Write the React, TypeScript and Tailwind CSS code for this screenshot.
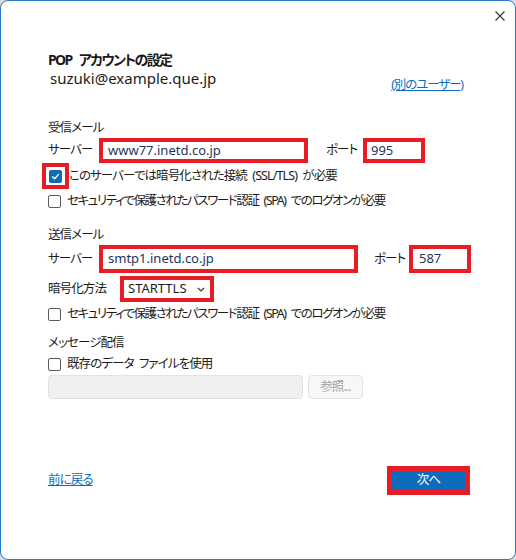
const FONT = "font-['Noto_Sans','Noto_Sans_CJK_JP',sans-serif]";
const JP = 'text-[12.5px] tracking-[-0.9px] whitespace-nowrap [word-spacing:3px]';
const JP_TIGHT = 'text-[12.5px] tracking-[-1.4px] whitespace-nowrap [word-spacing:3px]';

function Checkbox({ checked }: { checked?: boolean }) {
  if (checked) {
    return (
      <span className="flex h-[13px] w-[13px] items-center justify-center rounded-[2px] bg-[#0f6cbd]">
        <svg width="9" height="9" viewBox="0 0 9 9" fill="none">
          <path d="M1.5 4.8 L3.6 6.8 L7.6 2.4" stroke="white" strokeWidth="1.3" strokeLinecap="round" strokeLinejoin="round" />
        </svg>
      </span>
    );
  }
  return <span className="block h-[13px] w-[13px] shrink-0 rounded-[2px] border border-[#5c5c5c] bg-white" />;
}

function RedBox({ className, children }: { className: string; children: React.ReactNode }) {
  return (
    <div className={`flex shrink-0 items-center border-4 border-[#e81c24] bg-white ${className}`}>
      {children}
    </div>
  );
}

export default function App() {
  return (
    <div className={`h-[560px] w-[516px] bg-[#dcdcdc] ${FONT} [font-feature-settings:'palt'] text-[13px] text-[#1b1b1b]`}>
      <div className="relative flex h-full w-full flex-col rounded-[8px] border border-[#2a7ad0] bg-white pl-[47px]">
        {/* Close */}
        <button className="absolute right-[10px] top-[10px] h-[10px] w-[10px]">
          <svg width="10" height="10" viewBox="0 0 10 10">
            <path d="M0.5 0.5 L9.5 9.5 M9.5 0.5 L0.5 9.5" stroke="#333" strokeWidth="1.1" />
          </svg>
        </button>

        {/* Header */}
        <div className="mt-[50px] flex h-[18px] items-center text-[14px] font-bold leading-[18px] tracking-[-1.6px] [word-spacing:5px]">
          POP アカウントの設定
        </div>
        <div className="flex h-[18px] items-start pr-[52px]">
          <span className="ml-[2px] text-[15px] leading-[18px]">suzuki@example.que.jp</span>
          <a className="ml-auto mt-[8px] text-[12.5px] leading-[16px] tracking-[-1.1px] text-[#0a6cc8] underline">(別のユーザー)</a>
        </div>

        {/* 受信メール */}
        <div className={`mt-[33px] flex h-[16px] items-center ${JP}`}>受信メール</div>
        <div className="mt-[2px] flex h-[25px] items-center">
          <span className={`w-[51px] ${JP}`}>サーバー</span>
          <RedBox className="h-[25px] w-[209px] pl-[5px] text-[#1e3560]">www77.inetd.co.jp</RedBox>
          <span className={`ml-[18px] w-[37px] ${JP}`}>ポート</span>
          <RedBox className="h-[25px] w-[62px] pl-[4px] text-[#1e3560]">995</RedBox>
        </div>
        <div className="flex h-[26px] items-center">
          <div className="ml-[-6px] flex h-[26px] w-[27px] items-center justify-center border-4 border-[#e81c24]">
            <Checkbox checked />
          </div>
          <span className={JP}>このサーバーでは暗号化された接続 (SSL/TLS) が必要</span>
        </div>
        <div className="mt-[4px] flex h-[16px] items-center">
          <Checkbox />
          <span className={`ml-[6px] ${JP_TIGHT}`}>セキュリティで保護されたパスワード認証 (SPA) でのログオンが必要</span>
        </div>

        {/* 送信メール */}
        <div className={`mt-[18px] flex h-[16px] items-center ${JP}`}>送信メール</div>
        <div className="mt-[2px] flex h-[28px] items-center">
          <span className={`w-[51px] ${JP}`}>サーバー</span>
          <RedBox className="h-[28px] w-[259px] pl-[5px] text-[#1e3560]">smtp1.inetd.co.jp</RedBox>
          <span className={`ml-[16px] w-[35px] ${JP}`}>ポート</span>
          <RedBox className="h-[28px] w-[62px] pl-[6px] text-[#1e3560]">587</RedBox>
        </div>
        <div className="mt-[3px] flex h-[26px] items-center">
          <span className={`w-[72px] ${JP}`}>暗号化方法</span>
          <RedBox className="h-[26px] w-[94px] pl-[4px]">
            <span>STARTTLS</span>
            <svg className="ml-[10px]" width="8" height="5" viewBox="0 0 8 5">
              <path d="M1 1 L4 4 L7 1" stroke="#333" strokeWidth="1.1" fill="none" />
            </svg>
          </RedBox>
        </div>
        <div className="mt-[4px] flex h-[16px] items-center">
          <Checkbox />
          <span className={`ml-[6px] ${JP_TIGHT}`}>セキュリティで保護されたパスワード認証 (SPA) でのログオンが必要</span>
        </div>

        {/* メッセージ配信 */}
        <div className={`mt-[13px] flex h-[16px] items-center ${JP}`}>メッセージ配信</div>
        <div className="mt-[5px] flex h-[16px] items-center">
          <Checkbox />
          <span className={`ml-[6px] ${JP}`}>既存のデータ ファイルを使用</span>
        </div>
        <div className="mt-[3px] flex h-[24px] items-center">
          <div className="h-[24px] w-[255px] rounded-[4px] border border-[#e2e2e2] bg-[#f0f0f0]" />
          <div className={`ml-[5px] flex h-[24px] w-[55px] items-center justify-center rounded-[4px] border border-[#e2e2e2] bg-[#f7f7f7] text-[#a3a3a3] ${JP}`}>
            参照...
          </div>
        </div>

        {/* Footer */}
        <div className="mt-[67px] flex h-[29px] items-center pr-[45px]">
          <a className={`text-[#0a6cc8] underline ${JP}`}>前に戻る</a>
          <div className="ml-auto flex h-[29px] w-[83px] border-[5px] border-[#e81c24] bg-[#0f6cbd]">
            <span className={`flex w-full items-center justify-center text-white ${JP}`}>次へ</span>
          </div>
        </div>
      </div>
    </div>
  );
}
